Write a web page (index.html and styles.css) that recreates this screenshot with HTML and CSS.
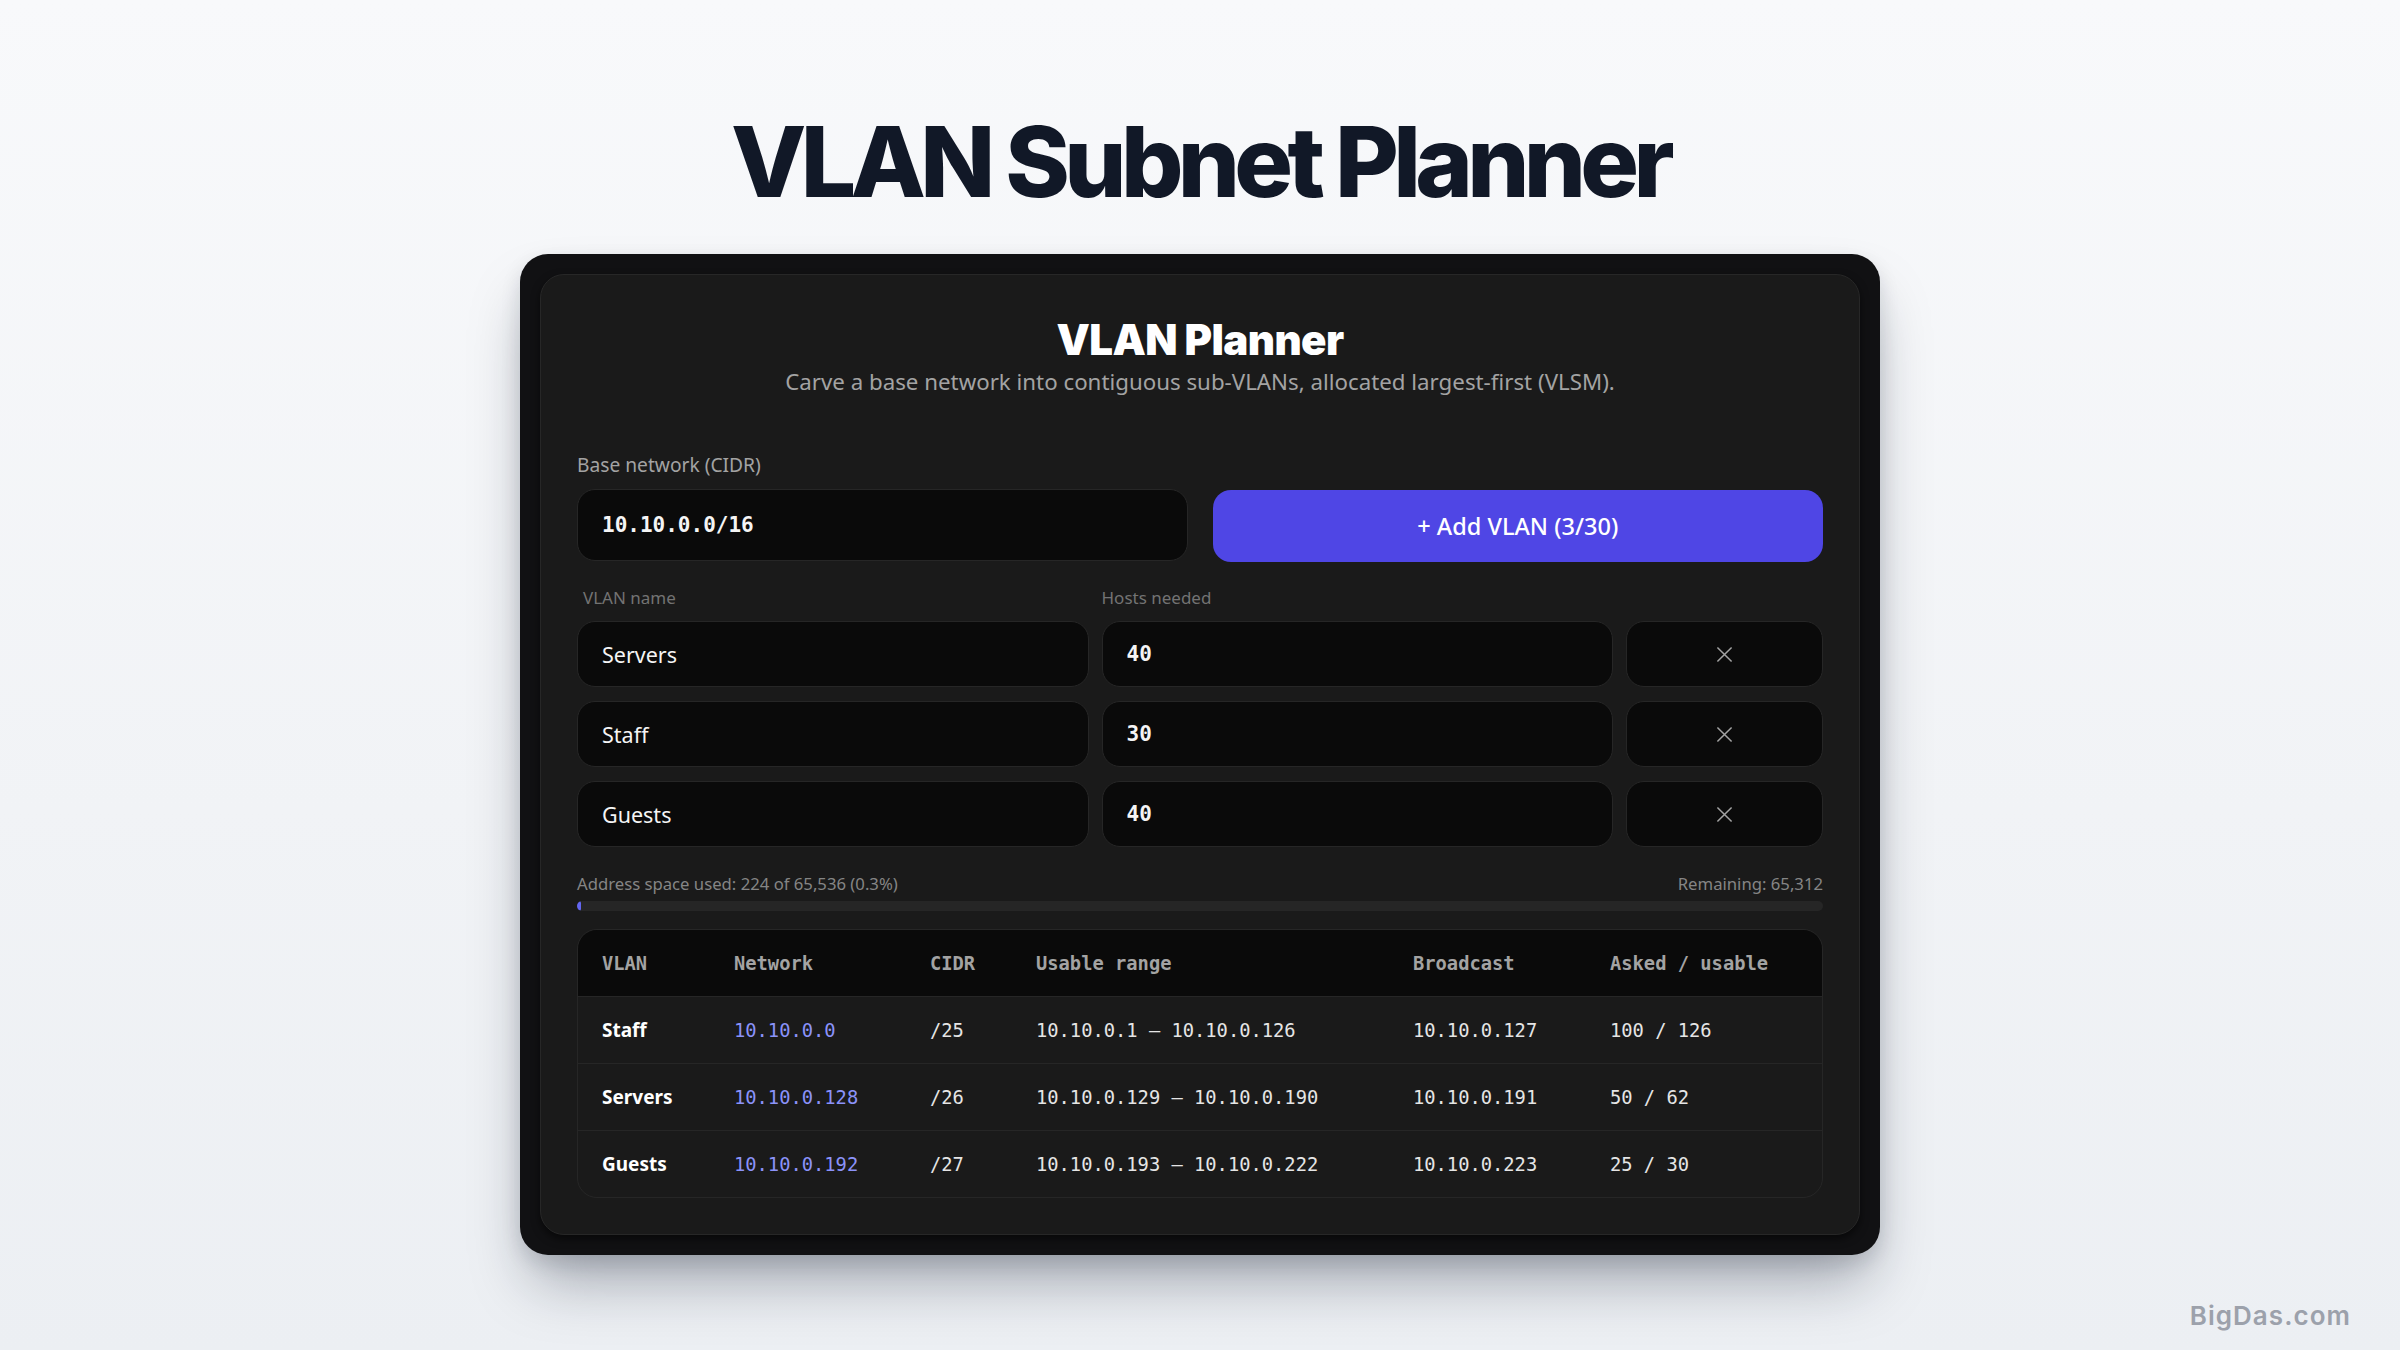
FILE: index.html
```html
<!DOCTYPE html>
<html lang="en">
<head>
<meta charset="utf-8">
<title>VLAN Subnet Planner</title>
<link rel="stylesheet" href="styles.css">
</head>
<body>
<main class="page">
  <h1 class="title">VLAN Subnet Planner</h1>
  <div class="frame">
    <section class="card">
      <header class="card-head">
        <h2 class="card-title">VLAN Planner</h2>
        <p class="card-sub">Carve a base network into contiguous sub-VLANs, allocated largest-first (VLSM).</p>
      </header>

      <div class="field-label">Base network (CIDR)</div>
      <div class="base-row">
        <div class="field mono base-input">10.10.0.0/16</div>
        <button class="add-btn" type="button">+ Add VLAN (3/30)</button>
      </div>

      <div class="vlan-head">
        <div class="col-label first">VLAN name</div>
        <div class="col-label">Hosts needed</div>
        <div></div>
      </div>
      <div class="vlan-rows">
        <div class="field name">Servers</div>
        <div class="field mono">40</div>
        <button class="field remove" type="button" aria-label="Remove"><svg class="x-icon" viewBox="0 0 18 18"><path d="M1.5 1.5 L16.5 16.5 M16.5 1.5 L1.5 16.5"/></svg></button>
        <div class="field name">Staff</div>
        <div class="field mono">30</div>
        <button class="field remove" type="button" aria-label="Remove"><svg class="x-icon" viewBox="0 0 18 18"><path d="M1.5 1.5 L16.5 16.5 M16.5 1.5 L1.5 16.5"/></svg></button>
        <div class="field name">Guests</div>
        <div class="field mono">40</div>
        <button class="field remove" type="button" aria-label="Remove"><svg class="x-icon" viewBox="0 0 18 18"><path d="M1.5 1.5 L16.5 16.5 M16.5 1.5 L1.5 16.5"/></svg></button>
      </div>

      <div class="usage">
        <span>Address space used: 224 of 65,536 (0.3%)</span>
        <span>Remaining: 65,312</span>
      </div>
      <div class="bar"><div class="bar-fill" style="width:0.34%"></div></div>

      <div class="table-wrap">
        <table class="alloc">
          <colgroup>
            <col class="c1"><col class="c2"><col class="c3"><col class="c4"><col class="c5"><col class="c6">
          </colgroup>
          <thead>
            <tr><th>VLAN</th><th>Network</th><th>CIDR</th><th>Usable range</th><th>Broadcast</th><th>Asked / usable</th></tr>
          </thead>
          <tbody>
            <tr><td class="vname">Staff</td><td class="net">10.10.0.0</td><td>/25</td><td>10.10.0.1 – 10.10.0.126</td><td>10.10.0.127</td><td>100 / 126</td></tr>
            <tr><td class="vname">Servers</td><td class="net">10.10.0.128</td><td>/26</td><td>10.10.0.129 – 10.10.0.190</td><td>10.10.0.191</td><td>50 / 62</td></tr>
            <tr><td class="vname">Guests</td><td class="net">10.10.0.192</td><td>/27</td><td>10.10.0.193 – 10.10.0.222</td><td>10.10.0.223</td><td>25 / 30</td></tr>
          </tbody>
        </table>
      </div>
    </section>
  </div>
  <div class="watermark">BigDas.com</div>
</main>
</body>
</html>
```

FILE: styles.css
```css
* { box-sizing: border-box; }
html, body { margin: 0; padding: 0; }
body {
  width: 2400px;
  height: 1350px;
  overflow: hidden;
  background: linear-gradient(180deg, #f8f9fb 0%, #f1f3f6 60%, #eceff3 100%);
  font-family: "Noto Sans", "Open Sans", sans-serif;
}
.page {
  position: relative;
  height: 1350px;
  display: flex;
  flex-direction: column;
  align-items: center;
  padding-top: 113px;
}
.title {
  margin: 0;
  font-family: Inter, "Noto Sans", sans-serif;
  font-weight: 800;
  font-size: 98px;
  line-height: 1;
  letter-spacing: -0.058em;
  color: #111827;
}
.frame {
  margin-top: 43px;
  width: 1360px;
  padding: 20px;
  background: #111113;
  border-radius: 28px;
  box-shadow: 0 36px 60px -12px rgba(15, 23, 42, 0.35), 0 8px 20px rgba(15, 23, 42, 0.12);
}
.card {
  background: #1a1a1a;
  border: 1px solid #272727;
  border-radius: 24px;
  padding: 40px 36px 36px;
  box-shadow: 0 4px 8px rgba(0, 0, 0, 0.55);
}
.card-head { text-align: center; }
.card-title {
  margin: 0;
  font-family: Inter, "Noto Sans", sans-serif;
  font-weight: 900;
  font-size: 42px;
  line-height: 50px;
  letter-spacing: -0.015em;
  color: #ffffff;
}
.card-sub {
  margin: 1px 0 0;
  font-size: 22.3px;
  line-height: 32px;
  color: #a3a3a3;
}
.field-label {
  margin-top: 53px;
  font-size: 19.2px;
  line-height: 28px;
  color: #a3a3a3;
}
.base-row {
  margin-top: 10px;
  display: grid;
  grid-template-columns: 1fr 1fr;
  gap: 25px;
}
.field {
  height: 72px;
  display: flex;
  align-items: center;
  padding: 0 24px;
  background: #0a0a0a;
  border: 1.5px solid #262626;
  border-radius: 18px;
  color: #f5f5f5;
  font-size: 21.5px;
}
.mono {
  font-family: "DejaVu Sans Mono", "Liberation Mono", monospace;
  font-size: 21px;
  font-weight: 600;
}
.add-btn {
  height: 72px;
  margin-top: 1px;
  border: none;
  border-radius: 18px;
  background: #4f46e5;
  color: #ffffff;
  font-family: "Noto Sans", sans-serif;
  font-weight: 500;
  font-size: 23.5px;
  cursor: pointer;
}
.vlan-head, .vlan-rows {
  display: grid;
  grid-template-columns: 1fr 1fr 197px;
  column-gap: 13px;
}
.vlan-head { margin-top: 24px; }
.col-label {
  font-size: 17px;
  line-height: 24px;
  color: #737373;
}
.col-label.first { padding-left: 6px; }
.vlan-rows {
  margin-top: 11px;
  row-gap: 14px;
}
.vlan-rows .field { height: 66px; }
.remove {
  justify-content: center;
  cursor: pointer;
}
.x-icon {
  width: 17px;
  height: 17px;
  stroke: #a3a3a3;
  stroke-width: 1.6;
  fill: none;
}
.usage {
  margin-top: 25px;
  display: flex;
  justify-content: space-between;
  font-size: 16.7px;
  line-height: 24px;
  color: #858585;
}
.bar {
  margin-top: 5px;
  height: 10px;
  border-radius: 5px;
  background: #262626;
  overflow: hidden;
}
.bar-fill {
  height: 100%;
  min-width: 4px;
  border-radius: 5px;
  background: #6366f1;
}
.table-wrap {
  margin-top: 18px;
  border: 1px solid #262626;
  border-radius: 20px;
  overflow: hidden;
}
.alloc {
  width: 100%;
  border-collapse: separate;
  border-spacing: 0;
  table-layout: fixed;
  font-family: "DejaVu Sans Mono", "Liberation Mono", monospace;
  font-size: 18.75px;
}
.c1 { width: 132px; }
.c2 { width: 196px; }
.c3 { width: 106px; }
.c4 { width: 377px; }
.c5 { width: 197px; }
.alloc th {
  height: 66px;
  padding: 0 24px;
  text-align: left;
  background: #0a0a0a;
  color: #a3a3a3;
  font-weight: 700;
}
.alloc td {
  height: 67px;
  padding: 0 24px;
  border-top: 1px solid #262626;
  color: #e5e5e5;
  white-space: nowrap;
}
.alloc td.vname {
  font-family: "Noto Sans", sans-serif;
  font-weight: 700;
  font-size: 19px;
  color: #ffffff;
}
.alloc td.net { color: #8b92f9; }
.watermark {
  position: absolute;
  right: 49px;
  bottom: 19px;
  font-family: Inter, "Noto Sans", sans-serif;
  font-weight: 600;
  font-size: 26px;
  letter-spacing: 0.04em;
  color: #9ca1ab;
}
```
